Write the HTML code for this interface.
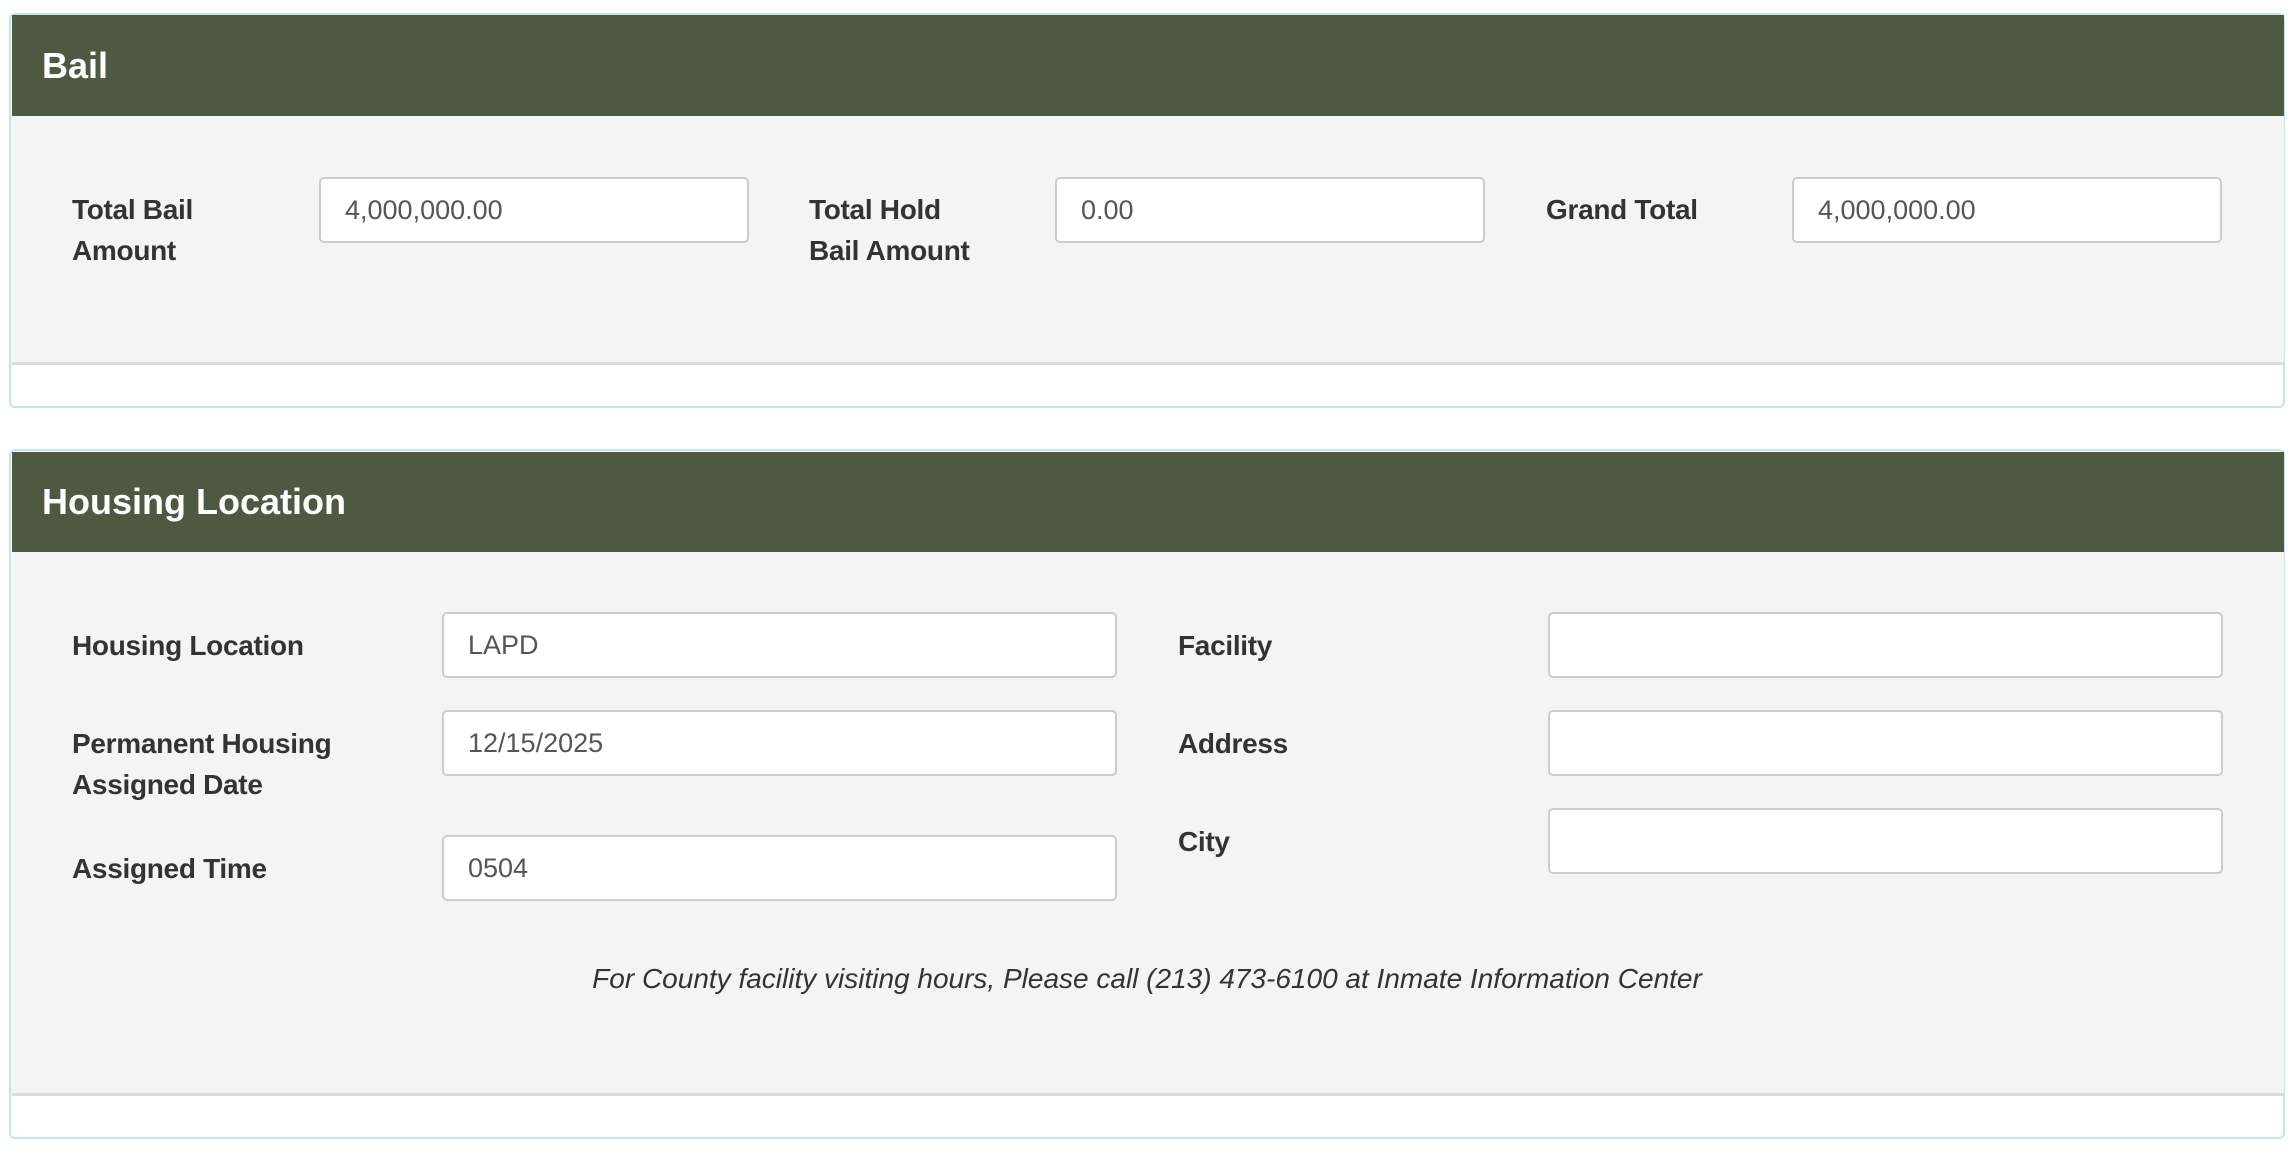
<!DOCTYPE html>
<html><head><style>
body{margin:0;width:2294px;height:1166px;background:#fff;position:relative;overflow:hidden;font-family:"Liberation Sans",Arial,sans-serif;color:#333}
.outer{position:absolute;left:9px;width:2276px;border:2px solid #bfe6ee;border-radius:6px;box-sizing:border-box}
.hdr{position:absolute;left:12px;width:2272px;background:#4d5a41;color:#fff;font-weight:bold;font-size:36px}
.hdr span{position:absolute;left:30px;top:50%;transform:translateY(-50%)}
.body{position:absolute;left:12px;width:2272px;background:#f4f4f4;box-shadow:0 3px 0 #dcdcdc}
.lbl{position:absolute;font-weight:bold;font-size:28px;line-height:41px;letter-spacing:-0.3px}
.inp{position:absolute;height:66px;background:#fff;border:2px solid #ccc;border-radius:5px;box-sizing:border-box;font-size:27px;color:#555;line-height:62px;padding-left:24px}
.note{position:absolute;left:0;width:2294px;text-align:center;font-style:italic;font-size:28px;top:963px}
</style></head><body>
<div class="outer" style="top:13px;height:395px"></div>
<div class="hdr" style="top:15px;height:101px"><span>Bail</span></div>
<div class="body" style="top:116px;height:246px"></div>
<div class="lbl" style="left:72px;top:189px">Total Bail<br>Amount</div>
<div class="inp" style="left:319px;top:177px;width:430px">4,000,000.00</div>
<div class="lbl" style="left:809px;top:189px">Total Hold<br>Bail Amount</div>
<div class="inp" style="left:1055px;top:177px;width:430px">0.00</div>
<div class="lbl" style="left:1546px;top:189px">Grand Total</div>
<div class="inp" style="left:1792px;top:177px;width:430px">4,000,000.00</div>

<div class="outer" style="top:449px;height:690px"></div>
<div class="hdr" style="top:452px;height:100px"><span>Housing Location</span></div>
<div class="body" style="top:552px;height:541px"></div>
<div class="lbl" style="left:72px;top:625px">Housing Location</div>
<div class="inp" style="left:442px;top:612px;width:675px">LAPD</div>
<div class="lbl" style="left:72px;top:723px">Permanent Housing<br>Assigned Date</div>
<div class="inp" style="left:442px;top:710px;width:675px">12/15/2025</div>
<div class="lbl" style="left:72px;top:848px">Assigned Time</div>
<div class="inp" style="left:442px;top:835px;width:675px">0504</div>
<div class="lbl" style="left:1178px;top:625px">Facility</div>
<div class="inp" style="left:1548px;top:612px;width:675px"></div>
<div class="lbl" style="left:1178px;top:723px">Address</div>
<div class="inp" style="left:1548px;top:710px;width:675px"></div>
<div class="lbl" style="left:1178px;top:821px">City</div>
<div class="inp" style="left:1548px;top:808px;width:675px"></div>
<div class="note">For County facility visiting hours, Please call (213) 473-6100 at Inmate Information Center</div>
</body></html>
